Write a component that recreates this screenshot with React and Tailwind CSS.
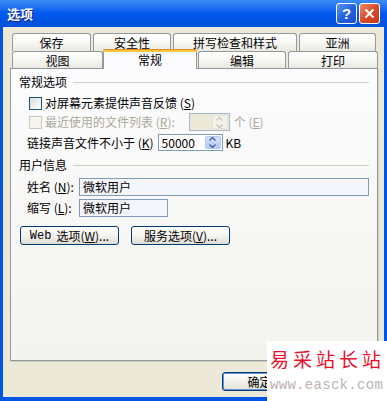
const font = { fontFamily: '"Noto Sans CJK SC", "Liberation Sans", sans-serif' };

const Tab = ({ className = "", children }) => (
  <div
    className={`flex items-center justify-center rounded-t-[3px] border border-b-0 border-[#919B9C] bg-gradient-to-b from-white via-[#F7F7F4] to-[#E9E8E1] text-[12px] leading-none text-black ${className}`}
  >
    {children}
  </div>
);

const U = ({ children }) => <span className="underline underline-offset-1">{children}</span>;

const SpinButton = ({ disabled }) => (
  <div
    className={`flex h-full w-[16px] flex-col items-center justify-center gap-[3px] rounded-[2px] border ${
      disabled
        ? "border-[#E3E2DA] bg-[#F2F1EB]"
        : "border-[#B4C8F6] bg-gradient-to-b from-[#D6E2FD] to-[#B3C9F7]"
    }`}
  >
    <svg width="7" height="4" viewBox="0 0 7 4">
      <path d="M0.5 3.5 L3.5 0.5 L6.5 3.5" fill="none" stroke={disabled ? "#C9C7BA" : "#4D6185"} strokeWidth="1.4" />
    </svg>
    <svg width="7" height="4" viewBox="0 0 7 4">
      <path d="M0.5 0.5 L3.5 3.5 L6.5 0.5" fill="none" stroke={disabled ? "#C9C7BA" : "#4D6185"} strokeWidth="1.4" />
    </svg>
  </div>
);

const GroupLabel = ({ children, className = "" }) => (
  <div className={`flex h-[16px] items-center ${className}`}>
    <span className="text-[12px] leading-none text-black">{children}</span>
    <div className="ml-[6px] mr-[8px] h-px flex-1 bg-[#D0D0BF]" />
  </div>
);

const XpButton = ({ className = "", children }) => (
  <div
    className={`flex items-center justify-center rounded-[3px] border border-[#003C74] bg-gradient-to-b from-white via-[#F5F4F0] to-[#DEDCD2] text-[12px] leading-none text-black ${className}`}
  >
    {children}
  </div>
);

export default function App() {
  return (
    <div className="relative h-[401px] w-[387px] overflow-hidden bg-[#0055E5]" style={font}>
      {/* Title bar */}
      <div className="flex h-[27px] items-center bg-gradient-to-b from-[#3B8CF5] via-[#0058EE] to-[#0050DA] px-[7px]">
        <span className="text-[13px] font-bold leading-none text-white [text-shadow:1px_1px_0_#0A1E80]">选项</span>
        <div className="ml-auto flex gap-[2px]">
          <div className="flex h-[21px] w-[21px] items-center justify-center rounded-[3px] border border-white bg-gradient-to-br from-[#5A95F5] via-[#2463DE] to-[#1A4FCB]">
            <span className="text-[15px] font-bold leading-none text-white" style={{ fontFamily: '"Liberation Sans", sans-serif' }}>?</span>
          </div>
          <div className="flex h-[21px] w-[21px] items-center justify-center rounded-[3px] border border-white bg-gradient-to-br from-[#EB8A6E] via-[#DA4A25] to-[#C23A17]">
            <svg width="11" height="11" viewBox="0 0 11 11">
              <path d="M1.5 1.5 L9.5 9.5 M9.5 1.5 L1.5 9.5" stroke="white" strokeWidth="2.2" />
            </svg>
          </div>
        </div>
      </div>

      {/* Window body */}
      <div className="mx-[3px] flex h-[370px] flex-col bg-[#ECE9D8] pt-[6px]">
        {/* Tabs */}
        <div className="ml-[9px] flex h-[18px] gap-[2px]">
          <Tab className="w-[79px]">保存</Tab>
          <Tab className="w-[78px]">安全性</Tab>
          <Tab className="w-[124px]">拼写检查和样式</Tab>
          <Tab className="w-[77px]">亚洲</Tab>
        </div>
        <div className="ml-[9px] flex h-[17px]">
          <Tab className="w-[91px] pt-[1px]">视图</Tab>
          <div className="relative z-10 -mt-[2px] flex h-[20px] w-[94px] flex-col rounded-t-[3px] border border-b-0 border-[#919B9C] bg-[#FCFCFE]">
            <div className="-mx-px -mt-px h-[3px] rounded-t-[3px] border-t border-[#E68B2C] bg-[#FFC73C]" />
            <div className="flex flex-1 items-start justify-center pt-[2px] text-[12px] leading-none text-black">常规</div>
          </div>
          <Tab className="ml-px w-[88px] pt-[1px]">编辑</Tab>
          <Tab className="ml-[2px] w-[90px] pt-[1px]">打印</Tab>
        </div>

        {/* Panel */}
        <div className="ml-[7px] flex h-[293px] w-[368px] flex-col border border-[#919B9C] bg-gradient-to-b from-[#FCFCFE] to-[#F4F3EE] pl-[8px] shadow-[1px_1px_0_#D0CEBF]">
          <GroupLabel className="mt-[5px]">常规选项</GroupLabel>

          <div className="ml-[10px] mt-[5px] flex h-[16px] items-center">
            <div className="h-[13px] w-[13px] border border-[#1C5180] bg-gradient-to-br from-[#DCDCD7] to-white" />
            <span className="ml-[3px] text-[12px] leading-none text-black">
              对屏幕元素提供声音反馈 (<U>S</U>)
            </span>
          </div>

          <div className="ml-[10px] mt-[2px] flex h-[18px] items-center">
            <div className="h-[13px] w-[13px] border border-[#CAC8BB] bg-[#F5F4EF]" />
            <span className="ml-[3px] text-[12px] leading-none text-[#ACA899]">
              最近使用的文件列表 (<U>R</U>):
            </span>
            <div className="ml-[14px] flex h-[18px] w-[41px] items-stretch border border-[#A5B8CE] bg-[#ECE9D8] p-[1px]">
              <div className="flex-1" />
              <SpinButton disabled />
            </div>
            <span className="ml-[4px] text-[12px] leading-none text-[#ACA899]">
              个 (<U>E</U>)
            </span>
          </div>

          <div className="ml-[8px] mt-[3px] flex h-[17px] items-center">
            <span className="text-[12px] leading-none text-black">
              链接声音文件不小于 (<U>K</U>)
            </span>
            <div className="ml-[4px] flex h-[17px] w-[65px] items-stretch border border-[#7F9DB9] bg-white p-[1px]">
              <span className="flex flex-1 items-center pl-[2px] text-[12px] leading-none text-black">50000</span>
              <SpinButton />
            </div>
            <span className="ml-[3px] text-[12px] leading-none text-black">KB</span>
          </div>

          <GroupLabel className="mt-[6px]">用户信息</GroupLabel>

          <div className="ml-[8px] mt-[5px] flex h-[18px] items-center">
            <span className="w-[52px] text-[12px] leading-none text-black">
              姓名 (<U>N</U>):
            </span>
            <div className="flex h-[18px] w-[290px] items-center border border-[#7F9DB9] bg-[#F4F6FB] pl-[3px] text-[12px] leading-none text-black">
              微软用户
            </div>
          </div>

          <div className="ml-[8px] mt-[3px] flex h-[18px] items-center">
            <span className="w-[52px] text-[12px] leading-none text-black">
              缩写 (<U>L</U>):
            </span>
            <div className="flex h-[18px] w-[89px] items-center border border-[#7F9DB9] bg-[#F4F6FB] pl-[3px] text-[12px] leading-none text-black">
              微软用户
            </div>
          </div>

          <div className="ml-[1px] mt-[9px] flex gap-[12px]">
            <XpButton className="h-[19px] w-[99px]">
              <span style={{ fontFamily: '"Liberation Mono", "Noto Sans CJK SC", monospace' }}>Web</span>
              <span className="ml-[5px]">选项(<U>W</U>)...</span>
            </XpButton>
            <XpButton className="h-[19px] w-[99px]">
              服务选项(<U>V</U>)...
            </XpButton>
          </div>
        </div>

        {/* Bottom buttons */}
        <div className="ml-[219px] mt-[11px] flex">
          <div className="flex h-[19px] w-[75px] items-center justify-center rounded-[3px] border border-[#003C74] bg-gradient-to-b from-white to-[#E3E1D6] shadow-[inset_0_0_0_1px_#6E8DDB]">
            <span className="text-[12px] leading-none text-black">确定</span>
          </div>
        </div>
      </div>

      {/* Watermark */}
      <div className="absolute left-[267px] top-[341px] flex h-[60px] w-[120px] flex-col overflow-hidden bg-white pl-[3px]">
        <span
          className="mt-[4px] whitespace-nowrap text-[19px] leading-[28px] tracking-[4px] text-[#E8102A]"
          style={{ fontFamily: '"Noto Sans CJK SC", serif' }}
        >
          易采站长站
        </span>
        <span
          className="mt-[2px] whitespace-nowrap text-[14px] leading-[20px] tracking-[0.3px] text-[#BDB2B2]"
          style={{ fontFamily: '"Liberation Mono", monospace' }}
        >
          www.easck.com
        </span>
      </div>
    </div>
  );
}
